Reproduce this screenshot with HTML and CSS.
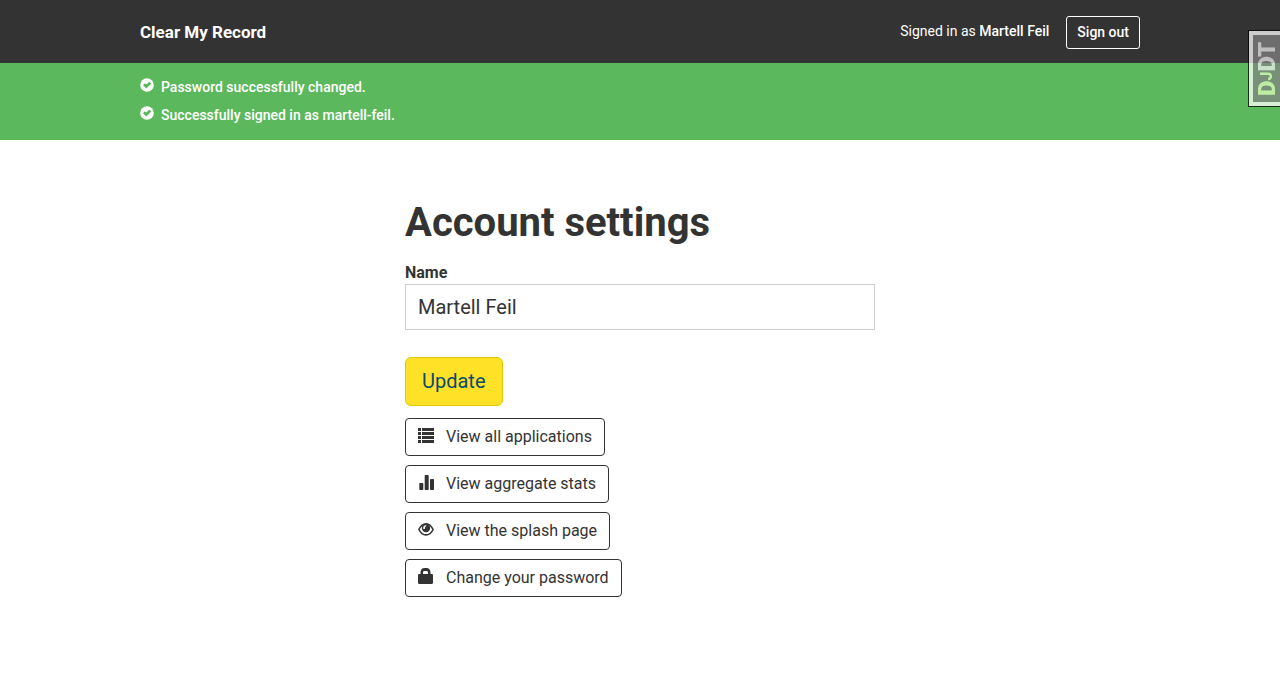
FILE: index.html
```html
<!DOCTYPE html>
<html lang="en">
<head>
<meta charset="utf-8">
<meta name="viewport" content="width=device-width, initial-scale=1">
<title>Account settings - Clear My Record</title>
<link rel="stylesheet" href="styles.css">
</head>
<body>
<header class="navbar">
  <div class="container navbar-row">
    <a class="brand" href="#">Clear My Record</a>
    <div class="session">
      <span class="signed-in">Signed in as <strong>Martell Feil</strong></span>
      <a class="sign-out" href="#">Sign out</a>
    </div>
  </div>
</header>
<section class="flash">
  <ul class="container flash-list">
    <li class="flash-item">
      <svg class="flash-icon" viewBox="0 0 14 14" aria-hidden="true"><circle cx="7" cy="7" r="6.8" fill="#fff"/><path d="M3 7.2 L4.8 5.300 L6.2 6.500 L9.200 3.700 L11.300 5.500 L6.300 10.500 Z" fill="#5cb85c"/></svg>
      <span>Password successfully changed.</span>
    </li>
    <li class="flash-item">
      <svg class="flash-icon" viewBox="0 0 14 14" aria-hidden="true"><circle cx="7" cy="7" r="6.8" fill="#fff"/><path d="M3 7.2 L4.8 5.300 L6.2 6.500 L9.200 3.700 L11.300 5.500 L6.300 10.500 Z" fill="#5cb85c"/></svg>
      <span>Successfully signed in as martell-feil.</span>
    </li>
  </ul>
</section>
<main class="settings">
  <h1 class="title">Account settings</h1>
  <form class="form">
    <label class="label" for="name">Name</label>
    <input class="text-input" id="name" type="text" value="Martell Feil">
    <button class="update" type="submit">Update</button>
  </form>
  <nav class="links">
    <a class="link-button" href="#">
      <svg class="link-icon" viewBox="0 0 16 16" aria-hidden="true"><path d="M0 1h3v3H0zM4 1h12v3H4zM0 5h3v3H0zM4 5h12v3H4zM0 9h3v3H0zM4 9h12v3H4zM0 13h3v3H0zM4 13h12v3H4z"/></svg>
      View all applications
    </a>
    <a class="link-button" href="#">
      <svg class="link-icon" viewBox="0 0 16 16" aria-hidden="true"><rect x="1.3" y="9" width="4" height="7" rx=".7"/><rect x="6.7" y="1" width="4" height="15" rx=".7"/><rect x="12" y="5" width="4" height="11" rx=".7"/></svg>
      View aggregate stats
    </a>
    <a class="link-button" href="#">
      <svg class="link-icon" viewBox="0 -1 16 16" aria-hidden="true"><path d="M.9 7.500C2.600 4 5.100 1.700 8 1.700s5.400 2.300 7.100 5.800C13.400 11 10.900 12.900 8 12.900S2.600 11 .9 7.500z" fill="#fff" stroke="#333" stroke-width="1.600"/><circle cx="8" cy="6" r="4.200"/><path d="M8 3.300C6.100 3.500 5 4.800 5.100 6.700L6.900 7.100C6.800 5.500 7.300 4.300 8.700 3.800z" fill="#fff"/></svg>
      View the splash page
    </a>
    <a class="link-button" href="#">
      <svg class="link-icon" viewBox="0 0 16 16" aria-hidden="true"><path fill-rule="evenodd" d="M1.200 6H2.500V4.200C2.700 1.500 4.300.1 6.500.1h2C10.700.1 12.300 1.500 12.500 4.200V6h1.300c.7 0 1.200.5 1.200 1.200v7.600c0 .7-.5 1.200-1.200 1.200H1.200C.5 16 0 15.500 0 14.800V7.200C0 6.500.5 6 1.200 6zM5 6h5V4.500c0-1-.6-1.600-1.500-1.600h-2C5.600 2.900 5 3.500 5 4.500z"/></svg>
      Change your password
    </a>
  </nav>
</main>
<aside class="debug-tab" title="Show toolbar">
  <div class="debug-text"><span class="debug-dj">D<small class="debug-j">J</small></span>DT</div>
</aside>
</body>
</html>
```

FILE: styles.css
```css
* { box-sizing: border-box; }

body {
  margin: 0;
  background: #fff;
  color: #333;
  font-family: Roboto, "Liberation Sans", sans-serif;
  font-size: 16px;
  line-height: 24px;
  overflow-x: hidden;
}

a { color: inherit; text-decoration: none; }

.container { max-width: 1040px; margin: 0 auto; padding: 0 20px; }

.navbar { background: #333; color: #fff; }
.navbar-row {
  display: flex;
  align-items: flex-start;
  justify-content: space-between;
  padding-top: 16px;
  padding-bottom: 14px;
}
.brand { padding-top: 4px; font-size: 17px; font-weight: 700; }
.session { display: flex; align-items: flex-start; gap: 17px; font-size: 14px; line-height: 20px; }
.session strong { font-weight: 500; }
.signed-in { padding-top: 5px; }
.sign-out {
  padding: 5px 10px 6px;
  border: 1px solid #fff;
  border-radius: 3px;
  font-weight: 500;
}

.flash { background: #5cb85c; color: #fff; }
.flash-list {
  display: flex;
  flex-direction: column;
  gap: 8px;
  padding-top: 14px;
  padding-bottom: 15px;
  list-style: none;
  font-size: 14px;
  line-height: 20px;
  font-weight: 500;
}
.flash-item { display: flex; gap: 7px; }
.flash-icon { width: 14px; height: 14px; margin-top: 1px; }

.settings { max-width: 470px; margin: 61px auto; }
.title { margin: 0 0 16px; font-size: 40px; line-height: 44px; font-weight: 700; }
.form { display: flex; flex-direction: column; align-items: flex-start; }
.label { line-height: 23px; font-weight: 700; }
.text-input {
  width: 100%;
  height: 46px;
  padding: 0 12px;
  border: 1px solid #ccc;
  border-radius: 0;
  background: #fff;
  color: #333;
  font: inherit;
  font-size: 20px;
}
.update {
  margin: 27px 0 12px;
  padding: 10px 16px 11px;
  border: 1px solid #e0c500;
  border-radius: 6px;
  background: #ffe228;
  color: #0b4b6e;
  font: inherit;
  font-size: 20px;
  line-height: 26px;
}
.links { display: flex; flex-direction: column; align-items: flex-start; gap: 9px; }
.link-button {
  display: flex;
  gap: 12px;
  padding: 6px 12px;
  border: 1px solid #333;
  border-radius: 4px;
}
.link-icon { width: 16px; height: 16px; margin-top: 2px; fill: #333; }

.debug-tab {
  position: fixed;
  top: 30px;
  right: 0;
  height: 77px;
  width: 32px;
  border: 1px solid #000;
  border-right: 0;
  background: #828282;
  box-shadow: inset 4px 4px #fff, inset 0 -4px #fff;
  opacity: .75;
}
.debug-text {
  width: 31px;
  height: 75px;
  padding: 10px 5px 0 0;
  writing-mode: vertical-rl;
  transform: rotate(180deg);
  color: #eee;
  font-family: Roboto, sans-serif;
  font-size: 24px;
  line-height: 26px;
  font-weight: 900;
}
.debug-dj { color: #dfb; }
.debug-j { font-size: 16px; }
```
